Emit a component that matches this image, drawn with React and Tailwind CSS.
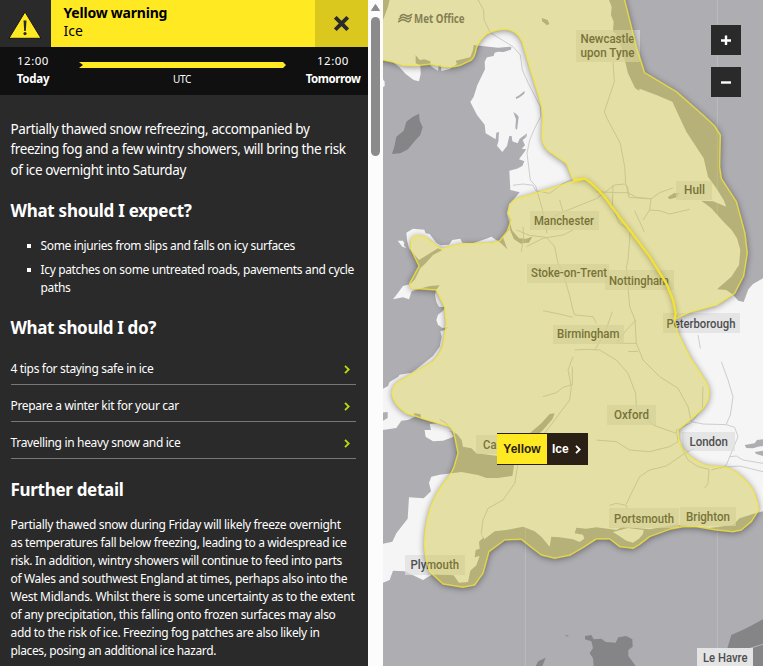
import React from "react";

const NORTH =
  "M-20 -20 L-20 178 L0 180 Q30 184 60 196 L100 197 L145 192 Q200 207 232 196 L265 180 Q276 170 280 145 Q288 120 312 101 Q340 88 372 88 Q402 92 418 125 Q428 160 440 200 L468 290 Q484 340 478 375 L477 412 Q480 440 500 455 L550 490 L570 538 L606 536 Q640 560 668 595 L712 655 L740 690 L800 770 L850 850 L870 900 L878 940 L875 958 L920 937 L1000 915 L1055 880 L1082 828 L1093 760 L1086 700 L1074 655 L1060 605 L1015 535 L1010 500 L1012 405 L995 378 L960 345 L880 275 L785 218 L760 140 L725 0 L720 -20 Z";

const SOUTH =
  "M375 640 Q380 606 400 597 L450 582 L520 560 L570 545 L606 536 Q640 560 668 595 L712 655 L740 690 L800 770 L850 850 L870 900 L878 940 L875 958 L885 1000 L920 1070 L965 1140 Q984 1165 975 1200 Q968 1218 950 1235 L885 1290 L888 1320 Q895 1350 920 1368 Q950 1395 985 1399 Q1030 1398 1050 1412 Q1090 1435 1112 1475 L1124 1510 L1127 1530 L1105 1565 L1075 1590 L1050 1595 L1000 1590 L940 1580 L900 1580 L860 1588 L800 1610 L770 1633 L750 1645 L710 1640 L680 1617 L640 1617 L600 1643 L560 1666 L515 1675 L475 1665 L445 1642 L415 1618 L365 1620 L318 1655 L300 1720 L275 1755 L240 1762 L180 1752 L140 1715 Q122 1660 125 1620 Q128 1570 142 1525 Q160 1475 190 1440 Q210 1415 216 1390 L225 1360 L217 1320 Q212 1285 196 1278 L140 1262 L70 1240 Q28 1210 27 1178 Q30 1150 60 1138 L150 1085 Q180 1055 183 1020 L190 970 L185 920 L160 870 L85 865 L80 850 L108 798 L85 750 Q80 712 96 708 Q120 704 140 722 L175 747 L235 732 L330 729 L350 722 L372 695 L385 660 Z";

const SHARED_EDGE = "M570 541 L606 536 Q640 560 668 595 L712 655 L740 690 L800 770 L850 850 L870 900 L878 940 L875 958";

const GB =
  "M-20 -20 L24 -20 L15 20 L0 60 L-20 60 L-20 195 L0 180 L28 185 L50 202 L68 222 L92 240 L108 244 L113 222 L112 196 L98 190 L98 165 L110 180 L124 178 L142 184 L143 198 L165 212 L167 196 L174 196 L175 213 L200 207 L222 192 L218 182 L262 172 L270 150 L272 135 L290 137 L345 143 L385 140 L384 149 L362 156 L345 155 L335 158 L332 168 L312 172 L305 185 L306 208 L283 255 L272 290 L262 306 L282 345 L305 374 L308 400 L338 418 L340 398 L348 396 L346 425 L342 437 L358 456 L372 438 L379 408 L386 408 L388 424 L404 430 L410 416 L432 400 L430 412 L419 420 L426 436 L416 446 L430 448 L408 478 L424 484 L418 498 L402 506 L379 512 L382 570 L410 577 L396 594 L378 612 L372 640 L378 664 L390 700 L410 726 L445 712 L438 728 L412 730 L392 716 L380 680 L382 662 L378 690 L360 712 L373 748 L352 728 L325 710 L310 716 L292 722 L270 730 L238 728 L232 716 L208 720 L198 734 L172 736 L160 728 L140 702 L128 700 L124 689 L90 686 L70 698 L72 720 L78 745 L108 780 L165 745 L178 750 L150 765 L128 790 L112 805 L96 838 L82 852 L60 858 L45 878 L30 898 L60 892 L78 898 L86 874 L110 866 L140 858 L170 856 L158 872 L156 886 L160 905 L168 920 L186 922 L180 932 L165 944 L160 960 L165 974 L178 984 L194 982 L186 990 L172 994 L176 1010 L170 1040 L150 1068 L100 1108 L85 1118 L50 1124 L46 1130 L20 1146 L15 1158 L0 1166 L-20 1170 L-20 1240 L14 1236 L14 1254 L0 1262 L-20 1270 L-20 1282 L0 1290 L40 1284 L55 1262 L75 1260 L96 1250 L92 1240 L112 1242 L115 1256 L140 1262 L165 1270 L140 1272 L144 1290 L125 1290 L130 1312 L180 1316 L186 1298 L206 1294 L222 1302 L236 1320 L240 1340 L265 1345 L280 1360 L345 1368 L400 1340 L440 1300 L475 1270 L500 1242 L515 1240 L508 1258 L480 1290 L440 1330 L395 1385 L388 1428 L345 1434 L310 1434 L285 1425 L235 1416 L170 1424 L145 1430 L138 1448 L144 1474 L122 1495 L78 1492 L74 1556 L40 1600 L28 1625 L0 1631 L-20 1632 L-20 1760 L0 1748 L20 1740 L30 1712 L65 1714 L120 1740 L150 1722 L185 1724 L212 1726 L228 1748 L255 1746 L262 1712 L280 1696 L290 1668 L275 1672 L278 1650 L290 1646 L288 1625 L300 1614 L290 1592 L304 1618 L335 1594 L370 1590 L420 1580 L455 1594 L475 1610 L500 1640 L505 1610 L530 1612 L570 1618 L590 1626 L604 1616 L600 1604 L575 1600 L580 1583 L610 1586 L640 1582 L700 1590 L720 1580 L800 1588 L880 1574 L980 1584 L1050 1575 L1070 1555 L1110 1542 L1140 1534 L1170 1530 L1170 830 L1140 835 L1110 852 L1096 868 L1082 906 L1066 902 L1050 884 L1030 870 L1002 868 L1045 830 L1068 795 L1072 750 L1062 715 L1046 690 L1020 664 L985 625 L955 602 L990 604 L1030 620 L1022 600 L1000 565 L975 530 L962 475 L910 395 L868 305 L820 285 L770 266 L768 272 L756 264 L735 220 L718 150 L698 100 L690 95 L692 65 L684 45 L686 20 L678 0 L678 -20 Z";

const ROADS = [
  "M280 -10 L302 30 L303 60 L322 98 L390 140 L412 165 L418 210 L436 250 L472 320 L473 350 L455 385 L440 420 L432 460 L437 500 L442 540 L458 558 L478 628 L492 700",
  "M390 556 L420 552 L450 556 L458 572 L500 580 L540 550 L570 538",
  "M690 185 L694 245 L664 335 L672 355 L712 430 L725 500 L728 550 L738 588",
  "M485 665 L530 640 L600 612 L640 596 L668 575 L695 555 L725 552 L735 562 L735 580",
  "M640 575 L700 578 L735 578 L760 592 L805 596 L830 578 L870 564",
  "M690 555 L688 620 L708 670 L742 690 L735 780 L730 800 L740 920 L756 960 L760 1030 L780 1080 L830 1130 L885 1165 L915 1220 L925 1265",
  "M735 580 L738 592 L790 596 L804 596 L800 630 L780 660",
  "M755 632 L770 665 L784 696 M800 630 L830 632 L860 642 L920 628 M530 600 L540 635",
  "M400 690 L440 706 L490 712 L515 740 L525 790 L540 820 L558 880 L570 930 L575 945 L630 950 L640 970",
  "M480 932 L520 940 L570 952 M430 740 L480 715 L540 705 L570 690",
  "M575 1050 L610 1048 L650 1050 L700 1080 L735 1120 L758 1180 L760 1220 L810 1275 L880 1300",
  "M570 1070 L555 1110 L565 1160 L560 1200 L500 1280 L445 1350 L405 1390 L395 1450 L360 1500 L315 1525 L300 1560 L295 1600",
  "M480 1190 L520 1178 L540 1162 L568 1154 L568 1100",
  "M640 1320 L700 1325 L740 1350 L800 1355 L860 1340 L885 1325",
  "M730 1512 L745 1480 L770 1430 L800 1410 L850 1398 L905 1360 L935 1345",
  "M680 1516 L700 1510 L730 1516 L733 1526",
  "M885 1325 L880 1290 L925 1268 L958 1225 L960 1160",
  "M925 1265 L960 1272 L1030 1274 L1055 1282 L1065 1310 L1030 1395 L1012 1405",
  "M945 1005 L952 1045 M1015 1085 L1035 1140 L1050 1190 L1042 1245 L1030 1272",
  "M890 1330 L915 1380 L945 1400 L978 1408 L975 1450 L965 1465",
  "M985 1410 L1010 1403 L1070 1398 L1140 1415",
  "M1040 1370 L1060 1368 L1080 1380 L1140 1390",
  "M635 1050 L665 1000 L688 935 M700 1030 L730 990 L760 960 M705 1030 L760 1030 M735 1055 L765 1054",
  "M415 755 L422 710 L420 680",
  "M170 1258 L190 1270 L215 1300 M560 1320 L600 1330",
];

const LABELS = [
  { x: 576, y: 30, w: 64, h: 32, t: ["Newcastle", "upon Tyne"], tx: 580.5, tw: 54, ty: [42.7, 56.7] },
  { x: 676, y: 181, w: 36, h: 19, t: ["Hull"], tx: 684, tw: 21, ty: [194] },
  { x: 530, y: 211, w: 69, h: 19, t: ["Manchester"], tx: 534, tw: 60, ty: [224.5] },
  { x: 527, y: 264, w: 82, h: 19, t: ["Stoke-on-Trent"], tx: 531, tw: 76, ty: [277.3] },
  { x: 605, y: 270, w: 69, h: 20, t: ["Nottingham"], tx: 609, tw: 60, ty: [284.5] },
  { x: 663, y: 313, w: 77, h: 20, t: ["Peterborough"], tx: 666.5, tw: 69, ty: [327.5] },
  { x: 553, y: 325, w: 71, h: 19, t: ["Birmingham"], tx: 557, tw: 62.5, ty: [338.3] },
  { x: 607, y: 405, w: 49, h: 20, t: ["Oxford"], tx: 614, tw: 35, ty: [419] },
  { x: 682, y: 432, w: 53, h: 19, t: ["London"], tx: 689.5, tw: 38.5, ty: [446] },
  { x: 476, y: 435, w: 45, h: 19, t: ["Ca"], tx: 483, tw: 13.5, ty: [448.5] },
  { x: 609, y: 508, w: 70, h: 20, t: ["Portsmouth"], tx: 614, tw: 60, ty: [522.5] },
  { x: 680, y: 507, w: 56, h: 19, t: ["Brighton"], tx: 686, tw: 44, ty: [520.5] },
  { x: 405, y: 555, w: 60, h: 20, t: ["Plymouth"], tx: 410.5, tw: 48.5, ty: [569] },
  { x: 697, y: 648, w: 56, h: 19, t: ["Le Havre"], tx: 703, tw: 44.5, ty: [662], solid: true },
];

function MapCanvas() {
  return (
    <svg className="block h-[666px] w-[380px]" viewBox="0 0 1140 1998">
      <defs>
        <filter id="outer-shadow" x="-10%" y="-10%" width="120%" height="120%">
          <feGaussianBlur in="SourceAlpha" stdDeviation="11" result="blur" />
          <feOffset in="blur" dy="4" result="moved" />
          <feComposite in="moved" in2="SourceAlpha" operator="out" />
        </filter>
      </defs>
      <rect width="1140" height="1998" fill="#aeadb2" />
      <g fill="#858587">
        <path d="M108 341 L110 362 L119 382 L112 405 L98 420 L75 448 L52 460 L27 462 L34 440 L40 410 L62 392 L70 365 L90 350 Z" />
        <path d="M606 1908 L625 1905 L632 1918 L655 1916 L668 1926 L698 1928 L706 1912 L730 1908 L748 1918 L749 1940 L736 1950 L736 1968 L758 1998 L632 1998 L630 1975 L620 1960 L630 1944 L625 1924 L606 1918 Z" />
        <path d="M1140 1858 L1090 1885 L1045 1905 L1033 1945 L1035 1998 L1140 1998 Z" />
        <path d="M488 1973 L478 1998 L458 1998 L466 1984 Z M548 1906 h8 v3 h-8 Z" />
      </g>
      <path d="M1100 1945 L1140 1933" stroke="#b5b5b7" strokeWidth="3" />
      <path d={GB} fill="#f5f5f5" />
      <g fill="#f5f5f5">
        <path d="M0 238 L5 245 L5 258 L0 262 Z" />
        <path d="M44 722 L60 722 L64 730 L62 736 L70 744 L58 740 Z" />
        <path d="M690 1596 L712 1590 L735 1584 L782 1590 L780 1602 L768 1616 L750 1628 L730 1622 L712 1610 Z" />
        <path d="M125 1290 L205 1296 L212 1310 L180 1322 L150 1324 L128 1310 Z" />
      </g>
      <g fill="#aeadb2">
        <path d="M398 292 L410 285 L425 272 L424 281 L410 292 L400 297 Z" />
        <path d="M391 336 L400 342 L407 350 L402 390 L397 385 L399 358 Z" />
        <path d="M476 54 L494 60 L499 72 L492 76 L478 64 Z" />
        <path d="M854 592 L872 580 L890 578 L882 592 L860 598 Z" />
        <path d="M380 662 L386 690 L408 715 L430 716 L448 710 L440 724 L415 731 L394 718 L382 692 Z" />
        <path d="M1085 1335 L1115 1330 L1122 1320 L1140 1318 L1140 1338 L1125 1340 L1110 1345 L1090 1344 Z M1115 1356 L1140 1352 L1140 1368 L1120 1362 Z" />
      </g>
      <g fill="none" stroke="#cdcdcf" strokeWidth="3" strokeLinejoin="round">
        {ROADS.map((d) => (
          <path key={d} d={d} />
        ))}
      </g>
      <path d="M427 0 V1998 M1003 0 V1998" stroke="#ffffff" strokeOpacity="0.18" strokeWidth="3" />

      {LABELS.map((l) => (
        <rect
          key={l.t[0]}
          x={(l.x - 383) * 3}
          y={l.y * 3}
          width={l.w * 3}
          height={l.h * 3}
          fill={l.solid ? "#e4e4e5" : "#dededf"}
          fillOpacity={l.solid ? 1 : 0.7}
        />
      ))}
      <g fontFamily="Roboto, sans-serif" fontWeight="500" fontSize="36.5" fill="#4e4e50">
        {LABELS.map((l) =>
          l.t.map((s, i) => (
            <text key={s} x={(l.tx - 383) * 3} y={l.ty[i] * 3} textLength={l.tw * 3} lengthAdjust="spacingAndGlyphs">
              {s}
            </text>
          ))
        )}
      </g>

      <g fill="#000" opacity="0.5">
        <path d={NORTH} filter="url(#outer-shadow)" />
        <path d={SOUTH} filter="url(#outer-shadow)" />
      </g>
      <g fill="rgb(197,183,14)" fillOpacity="0.35" stroke="#f7e83a" strokeOpacity="0.75" strokeWidth="4.5" strokeLinejoin="round">
        <path d={NORTH} />
        <path d={SOUTH} />
      </g>
      <path d={SHARED_EDGE} fill="none" stroke="#f2e136" strokeWidth="7" strokeLinejoin="round" />

      <g fill="none" stroke="#858055" strokeWidth="4.5" strokeLinecap="round">
        <path d="M52 49 Q60 40 68 46 T86 43" />
        <path d="M48 57 Q58 48 68 54 T85 51" />
        <path d="M47 65 Q58 55 68 62 T82 60" />
      </g>
      <text x="93" y="69" textLength="152" lengthAdjust="spacingAndGlyphs" fontFamily="'Noto Sans', sans-serif" fontWeight="700" fontSize="35" fill="#858055">
        Met Office
      </text>
    </svg>
  );
}

function Chevron({ className }) {
  return (
    <svg className={className} viewBox="0 0 6 9" fill="none" stroke="currentColor" strokeWidth="1.8">
      <path d="M1 0.8 L4.7 4.5 L1 8.2" />
    </svg>
  );
}

const ADVICE = ["4 tips for staying safe in ice", "Prepare a winter kit for your car", "Travelling in heavy snow and ice"];

export default function App() {
  return (
    <div className="flex h-[666px] w-[763px] overflow-hidden bg-[#fcfcfc] font-['Noto_Sans',sans-serif]">
      <aside className="h-full w-[368px] shrink-0 overflow-hidden bg-[#2a2a2a] text-white">
        <header className="flex h-[47px] bg-[#ffe923] text-black">
          <div className="flex w-[51px] items-center justify-center bg-[#2a2a2a]">
            <svg className="mt-[2px] mr-[1px] h-[28px] w-[34px]" viewBox="0 0 34 28">
              <path d="M17 1 L33 27.3 H1 Z" fill="#ffe923" stroke="#171717" strokeWidth="1" />
              <path d="M15.5 9.5 H18.5 L17.8 20 H16.2 Z" fill="#2a2a2a" />
              <circle cx="17" cy="22.6" r="1.6" fill="#2a2a2a" />
            </svg>
          </div>
          <div className="flex-1 pt-[4px] pl-[12.5px]">
            <h1 className="text-[14px] leading-[18px] font-bold tracking-[-0.22px]">Yellow warning</h1>
            <p className="text-[14px] leading-[18px]">Ice</p>
          </div>
          <div className="flex w-[53px] items-center justify-center bg-[#dac81f]">
            <svg className="h-[15px] w-[15px]" viewBox="0 0 15 15" stroke="#2a2a2a" strokeWidth="3.8">
              <path d="M1.3 1.3 L13.7 13.7 M13.7 1.3 L1.3 13.7" />
            </svg>
          </div>
        </header>

        <div className="flex h-[48px] justify-between bg-[#101010] pt-[5px] text-[11.5px] leading-[18px]">
          <div className="w-[66px] text-center">
            <p className="tracking-[0.5px]">12:00</p>
            <p className="font-bold tracking-[-0.2px]">Today</p>
          </div>
          <div className="flex flex-col items-center">
            <svg className="mt-[10px] h-[6px] w-[207px]" viewBox="0 0 207 6">
              <path d="M0 0 H204 L207 3 L204 6 H0 L4 3 Z" fill="#ffe923" />
            </svg>
            <p className="mt-[2px] text-[10px] leading-[18px] tracking-[-0.4px]">UTC</p>
          </div>
          <div className="w-[70px] text-center">
            <p className="tracking-[0.5px]">12:00</p>
            <p className="font-bold tracking-[-0.45px]">Tomorrow</p>
          </div>
        </div>

        <main className="pr-[12px] pl-[10.5px]">
          <p className="pt-[23.5px] text-[13.5px] leading-[20.5px] tracking-[-0.38px] whitespace-nowrap">
            <span className="block">Partially thawed snow refreezing, accompanied by</span>
            <span className="block">freezing fog and a few wintry showers, will bring the risk</span>
            <span className="block">of ice overnight into Saturday</span>
          </p>
          <h2 className="mt-[19px] text-[17px] leading-[24px] font-bold tracking-[-0.27px]">What should I expect?</h2>
          <ul className="mt-[14px] pl-[30px] text-[12px] leading-[18px] tracking-[-0.35px]">
            <li className="flex items-start">
              <span className="mt-[7px] -ml-[14px] h-[4px] w-[4px] shrink-0 bg-white" />
              <span className="ml-[10px] whitespace-nowrap">Some injuries from slips and falls on icy surfaces</span>
            </li>
            <li className="mt-[6px] flex items-start">
              <span className="mt-[7px] -ml-[14px] h-[4px] w-[4px] shrink-0 bg-white" />
              <span className="ml-[10px] whitespace-nowrap">
                Icy patches on some untreated roads, pavements and cycle
                <br />
                paths
              </span>
            </li>
          </ul>
          <h2 className="mt-[19px] text-[17px] leading-[24px] font-bold tracking-[-0.35px]">What should I do?</h2>
          <ul className="mt-[8px] text-[12px] tracking-[-0.33px]">
            {ADVICE.map((a) => (
              <li key={a} className="flex h-[37px] items-center justify-between border-b border-[#777] pt-[5px] pr-[6px]">
                <span>{a}</span>
                <Chevron className="mt-[2px] h-[9px] w-[6px] text-[#b9dc0c]" />
              </li>
            ))}
          </ul>
          <h2 className="mt-[19px] text-[17px] leading-[24px] font-bold tracking-[-0.3px]">Further detail</h2>
          <p className="mt-[13.5px] text-[12px] leading-[18px] whitespace-nowrap">
            <span className="block tracking-[-0.32px]">Partially thawed snow during Friday will likely freeze overnight</span>
            <span className="block tracking-[-0.35px]">as temperatures fall below freezing, leading to a widespread ice</span>
            <span className="block tracking-[-0.35px]">risk. In addition, wintry showers will continue to feed into parts</span>
            <span className="block tracking-[-0.33px]">of Wales and southwest England at times, perhaps also into the</span>
            <span className="block tracking-[-0.27px]">West Midlands. Whilst there is some uncertainty as to the extent</span>
            <span className="block tracking-[-0.33px]">of any precipitation, this falling onto frozen surfaces may also</span>
            <span className="block tracking-[-0.34px]">add to the risk of ice. Freezing fog patches are also likely in</span>
            <span className="block tracking-[-0.38px]">places, posing an additional ice hazard.</span>
          </p>
        </main>
      </aside>

      <div className="flex w-[15px] shrink-0 flex-col items-center bg-[#fcfcfc]">
        <svg className="mt-[4px] h-[7px] w-[9px]" viewBox="0 0 9 7">
          <path d="M4.5 0.5 L8.5 6.5 H0.5 Z" fill="#8b8b8b" stroke="#8b8b8b" strokeLinejoin="round" />
        </svg>
        <div className="mt-[6px] h-[139px] w-[9px] rounded-full bg-[#8b8b8b]" />
      </div>

      <section className="relative h-full w-[380px] shrink-0 overflow-hidden">
        <MapCanvas />
        <button className="absolute top-[25px] left-[328px] flex h-[30px] w-[30px] items-center justify-center bg-[#2a2a2a]">
          <svg className="h-[10px] w-[10px]" viewBox="0 0 10 10" stroke="#fff" strokeWidth="2.4">
            <path d="M0 5.5 H10 M5 0.5 V10" />
          </svg>
        </button>
        <button className="absolute top-[67px] left-[328px] flex h-[30px] w-[30px] items-center justify-center bg-[#2a2a2a]">
          <svg className="h-[10px] w-[10px]" viewBox="0 0 10 10" stroke="#fff" strokeWidth="2.4">
            <path d="M0 5.5 H10" />
          </svg>
        </button>
        <div className="absolute top-[433px] left-[114px] flex h-[32px] border-y border-[#2a2015] font-['Liberation_Sans',sans-serif] text-[12px] leading-[30px] font-bold">
          <span className="w-[50px] bg-[#ffe923] text-center text-[#2a2015]">Yellow</span>
          <span className="flex w-[41px] items-center bg-[#2a2015] pl-[5px] text-white">
            Ice
            <Chevron className="ml-[6px] h-[9px] w-[6px]" />
          </span>
        </div>
      </section>
    </div>
  );
}
